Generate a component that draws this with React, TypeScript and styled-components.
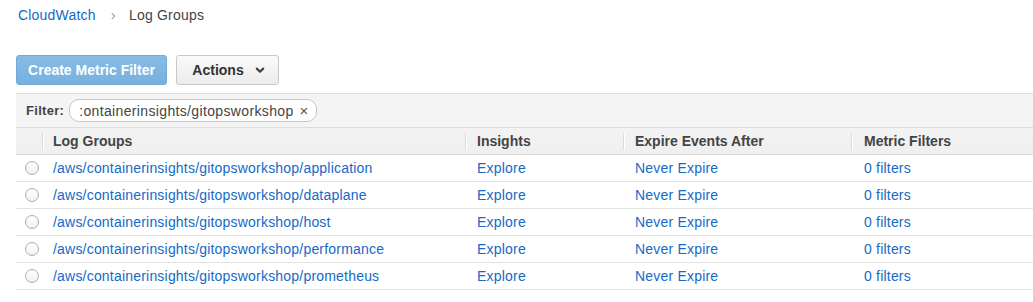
import React from "react";
import styled, { createGlobalStyle } from "styled-components";

const GlobalStyle = createGlobalStyle`
  html, body {
    margin: 0;
    padding: 0;
    background: #ffffff;
    font-family: "Liberation Sans", Arial, Helvetica, sans-serif;
    font-size: 14px;
    color: #333333;
  }
`;

const logGroups = [
  "/aws/containerinsights/gitopsworkshop/application",
  "/aws/containerinsights/gitopsworkshop/dataplane",
  "/aws/containerinsights/gitopsworkshop/host",
  "/aws/containerinsights/gitopsworkshop/performance",
  "/aws/containerinsights/gitopsworkshop/prometheus",
];

const App = () => {
  return (
    <Page>
      <GlobalStyle />
      <Breadcrumb>
        <Crumb>CloudWatch</Crumb>
        <Sep>›</Sep>
        <Current>Log Groups</Current>
      </Breadcrumb>

      <Toolbar>
        <PrimaryButton>Create Metric Filter</PrimaryButton>
        <MenuButton>
          Actions
          <svg width="10" height="7" viewBox="0 0 10 7">
            <path d="M1.8 1.6 L5 4.8 L8.2 1.6" fill="none" stroke="#444" strokeWidth="2.2" strokeLinecap="round" strokeLinejoin="round" />
          </svg>
        </MenuButton>
      </Toolbar>

      <Table>
        <FilterBar>
          <FilterLabel>Filter:</FilterLabel>
          <FilterPill>
            <PillText>:ontainerinsights/gitopsworkshop</PillText>
            <Clear>×</Clear>
          </FilterPill>
        </FilterBar>

        <HeaderRow>
          <HeadCell />
          <HeadCell $divider>Log Groups</HeadCell>
          <HeadCell $divider $pad={12}>Insights</HeadCell>
          <HeadCell $divider $pad={12}>Expire Events After</HeadCell>
          <HeadCell $divider $pad={13}>Metric Filters</HeadCell>
        </HeaderRow>

        {logGroups.map((name) => (
          <Row key={name}>
            <RadioCell>
              <Radio />
            </RadioCell>
            <Cell>
              <Link>{name}</Link>
            </Cell>
            <Cell $pad={12}>
              <Link>Explore</Link>
            </Cell>
            <Cell $pad={12}>
              <Link>Never Expire</Link>
            </Cell>
            <Cell $pad={13}>
              <Link>0 filters</Link>
            </Cell>
          </Row>
        ))}
      </Table>
    </Page>
  );
};

export default App;

const Page = styled.div`
  width: 1033px;
  height: 302px;
  overflow: hidden;
  padding-left: 16px;
  box-sizing: border-box;
`;

const Breadcrumb = styled.div`
  display: flex;
  align-items: center;
  height: 18px;
  padding: 6px 0 0 2px;
  line-height: 18px;
  letter-spacing: 0.2px;
`;

const Crumb = styled.span`
  color: #1569c7;
`;

const Sep = styled.span`
  color: #999999;
  font-size: 15px;
  margin: 0 13px 0 15px;
`;

const Current = styled.span`
  color: #444444;
`;

const Toolbar = styled.div`
  display: flex;
  gap: 9px;
  margin-top: 31px;
  height: 30px;
`;

const PrimaryButton = styled.div`
  display: flex;
  align-items: center;
  justify-content: center;
  width: 151px;
  height: 30px;
  box-sizing: border-box;
  background: linear-gradient(#86bbe6, #78b0df);
  border: 1px solid #74a9d6;
  border-radius: 3px;
  color: #ffffff;
  font-weight: bold;
  font-size: 14px;
`;

const MenuButton = styled.div`
  display: flex;
  align-items: center;
  justify-content: center;
  gap: 11px;
  width: 103px;
  height: 30px;
  box-sizing: border-box;
  background: linear-gradient(#fafafa, #ececec);
  border: 1px solid #c8c8c8;
  border-radius: 3px;
  color: #333333;
  font-weight: bold;
  font-size: 14px;
  padding-left: 2px;
`;

const Table = styled.div`
  margin-top: 8px;
  width: 1040px;
`;

const FilterBar = styled.div`
  display: flex;
  align-items: center;
  height: 33px;
  background: #f4f4f4;
  border-top: 1px solid #dcdcdc;
  border-bottom: 1px solid #dcdcdc;
  padding-left: 10px;
`;

const FilterLabel = styled.span`
  font-weight: bold;
  color: #444444;
  font-size: 13px;
  letter-spacing: 0.3px;
  margin-right: 5px;
`;

const FilterPill = styled.div`
  display: flex;
  align-items: center;
  justify-content: space-between;
  width: 248px;
  height: 23px;
  box-sizing: border-box;
  background: #ffffff;
  border: 1px solid #c6c6c6;
  border-radius: 10px;
  padding: 0 10px 0 9px;
  overflow: hidden;
`;

const PillText = styled.span`
  color: #444444;
  font-size: 14px;
  letter-spacing: 0.35px;
  white-space: nowrap;
`;

const Clear = styled.span`
  color: #555555;
  font-size: 15px;
  margin-left: 6px;
`;

const columns = "26px 423px 158px 228px 1fr";

const HeaderRow = styled.div`
  display: grid;
  grid-template-columns: ${columns};
  height: 26px;
  background: linear-gradient(#f3f3f3, #efefef);
  border-bottom: 1px solid #d8d8d8;
`;

const HeadCell = styled.div<{ $divider?: boolean; $pad?: number }>`
  position: relative;
  display: flex;
  align-items: center;
  padding-left: ${(p) => p.$pad ?? 11}px;
  font-weight: bold;
  color: #444444;
  font-size: 14px;
  white-space: nowrap;

  &::before {
    content: "";
    display: ${(p) => (p.$divider ? "block" : "none")};
    position: absolute;
    left: 0;
    top: 5px;
    bottom: 4px;
    width: 1px;
    background: #dadada;
    box-shadow: 1px 0 0 #ffffff;
  }
`;

const Row = styled.div`
  display: grid;
  grid-template-columns: ${columns};
  height: 26px;
  border-bottom: 1px solid #e3e3e3;
`;

const Cell = styled.div<{ $pad?: number }>`
  display: flex;
  align-items: center;
  padding-left: ${(p) => p.$pad ?? 11}px;
  white-space: nowrap;
`;

const RadioCell = styled.div`
  display: flex;
  align-items: center;
  justify-content: flex-end;
  padding-right: 3px;
`;

const Radio = styled.span`
  width: 14px;
  height: 14px;
  box-sizing: border-box;
  border-radius: 50%;
  border: 1px solid #adadad;
  background: linear-gradient(#ffffff, #f1f1f1);
`;

const Link = styled.span`
  color: #1569c7;
  font-size: 14px;
  letter-spacing: 0.2px;
`;
